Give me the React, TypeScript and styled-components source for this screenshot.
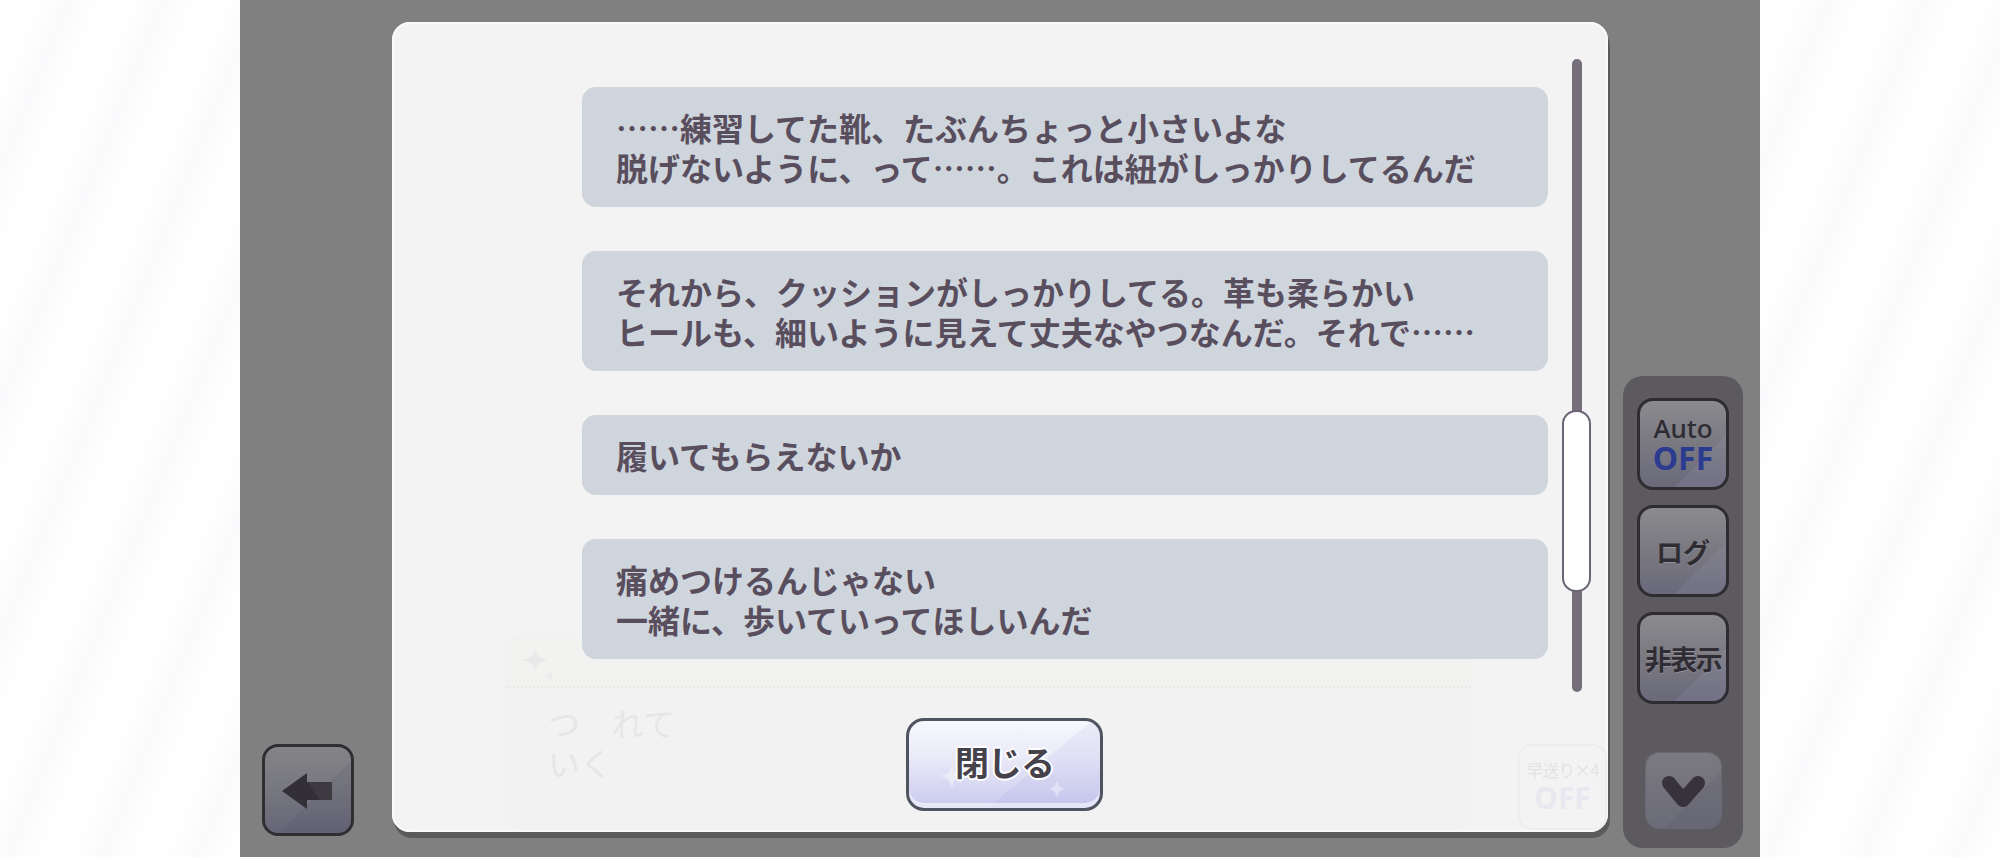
import styled, {createGlobalStyle} from 'styled-components';

const GlobalStyle = createGlobalStyle`
  html,
  body {
    margin: 0;
    padding: 0;
    width: 2000px;
    height: 857px;
    overflow: hidden;
    background: #ffffff;
    font-family: 'Noto Sans CJK JP', 'Noto Sans', sans-serif;
  }
`;

const lines = [
  ['……練習してた靴、たぶんちょっと小さいよな', '脱げないように、って……。これは紐がしっかりしてるんだ'],
  ['それから、クッションがしっかりしてる。革も柔らかい', 'ヒールも、細いように見えて丈夫なやつなんだ。それで……'],
  ['履いてもらえないか'],
  ['痛めつけるんじゃない', '一緒に、歩いていってほしいんだ'],
];

const Screen = styled.div`
  display: flex;
  width: 2000px;
  height: 857px;
`;

const Backdrop = styled.div`
  width: 240px;
  flex-shrink: 0;
  background: repeating-linear-gradient(
    112deg,
    #fefefe 0px,
    #fefefe 40px,
    #fafafc 64px,
    #fefefe 88px
  );
`;

const Stage = styled.div`
  flex: 1;
  display: flex;
  align-items: flex-end;
  padding: 0 17px 0 22px;
  background: #808080;
`;

const BackButton = styled.div`
  width: 92px;
  height: 92px;
  flex-shrink: 0;
  margin-bottom: 21px;
  box-sizing: border-box;
  border: 3px solid #302d33;
  border-radius: 16px;
  background: linear-gradient(135deg, transparent 58%, rgba(40, 40, 80, 0.08) 58%),
    linear-gradient(180deg, #848488 0%, #77777f 50%, #666679 100%);
  display: flex;
  align-items: center;
  justify-content: center;
`;

const Panel = styled.div`
  position: relative;
  align-self: flex-start;
  width: 1216px;
  height: 810px;
  flex-shrink: 0;
  margin: 22px 15px 0 38px;
  border-radius: 18px;
  background: #f3f3f3;
  box-shadow: inset 0 0 0 2px #fafafa, 2px 6px 0 #5b5b5b;
  display: flex;
  flex-direction: column;
`;

// game UI left under the translucent log panel
const GhostPlate = styled.div`
  position: absolute;
  left: 113px;
  top: 615px;
  width: 965px;
  height: 190px;
  border-radius: 14px;
  border: 1px solid #f0f0f0;
  background: #f2f2f2;
`;

const GhostName = styled.div`
  height: 50px;
  border-bottom: 2px dotted #e9e9e9;
  border-radius: 14px 14px 0 0;
  background: #f2f2f0;
  padding: 6px 0 0 15px;
  box-sizing: border-box;
`;

const GhostText = styled.div`
  padding: 14px 0 0 42px;
  font-size: 32px;
  line-height: 40px;
  color: #e6e6e6;
`;

const GhostFast = styled.div`
  position: absolute;
  left: 1126px;
  top: 722px;
  width: 89px;
  height: 86px;
  box-sizing: border-box;
  border: 2px solid #ededed;
  border-radius: 14px;
  display: flex;
  flex-direction: column;
  align-items: center;
  justify-content: center;
  gap: 2px;
`;

const GhostFastLabel = styled.div`
  font-size: 17px;
  line-height: 20px;
  color: #e3e3e3;
  letter-spacing: -1px;
`;

const GhostFastOff = styled.div`
  font-family: 'Noto Sans', sans-serif;
  font-weight: 700;
  font-size: 30px;
  line-height: 32px;
  color: #e8e9f0;
`;

const ScrollRow = styled.div`
  position: relative;
  display: flex;
  height: 633px;
  margin-top: 37px;
  padding-left: 190px;
`;

const List = styled.div`
  width: 966px;
  display: flex;
  flex-direction: column;
  gap: 44px;
  padding-top: 28px;
`;

const Bubble = styled.div`
  padding: 20px 34px;
  border-radius: 14px;
  background: #cfd5dc;
  color: #594e5e;
  font-size: 32px;
  font-weight: 700;
  line-height: 40px;
  white-space: nowrap;
`;

const ScrollTrack = styled.div`
  position: relative;
  width: 29px;
  margin-left: 14px;

  &::before {
    content: '';
    position: absolute;
    left: 10px;
    top: 0;
    bottom: 0;
    width: 10px;
    border-radius: 5px;
    background: #776e7b;
  }
`;

const ScrollThumb = styled.div`
  position: absolute;
  left: 0;
  width: 29px;
  box-sizing: border-box;
  border: 2px solid #6d6476;
  border-radius: 14px;
  background: #ffffff;
`;

const Footer = styled.div`
  position: relative;
  display: flex;
  justify-content: center;
  padding: 26px 0 0 9px;
`;

const CloseButton = styled.div`
  position: relative;
  width: 197px;
  height: 93px;
  box-sizing: border-box;
  border: 3px solid #4f5560;
  border-radius: 18px;
  background: linear-gradient(140deg, transparent 62%, rgba(150, 150, 220, 0.12) 62%),
    linear-gradient(180deg, #f7f7fd 0%, #ebebf9 40%, #c9c9ee 100%);
  box-shadow: inset 0 -5px 0 rgba(255, 255, 255, 0.55);
  display: flex;
  align-items: center;
  justify-content: center;
  overflow: hidden;
`;

const CloseLabel = styled.span`
  position: relative;
  margin-top: -6px;
  font-size: 34px;
  font-weight: 700;
  color: #45424c;
  letter-spacing: -1px;
  text-shadow: 2px 0 0 #fff, -2px 0 0 #fff, 0 2px 0 #fff, 0 -2px 0 #fff,
    1px 1px 0 #fff, -1px -1px 0 #fff, 1px -1px 0 #fff, -1px 1px 0 #fff;
`;

const Sparkle = styled.svg<{$x: number; $y: number}>`
  position: absolute;
  left: ${(p) => p.$x}px;
  top: ${(p) => p.$y}px;
`;

const SidePanel = styled.div`
  width: 120px;
  height: 472px;
  flex-shrink: 0;
  margin-bottom: 9px;
  box-sizing: border-box;
  padding: 22px 14px 20px;
  border-radius: 20px;
  background: #5c5a5e;
  display: flex;
  flex-direction: column;
  gap: 15px;
`;

const ToolButton = styled.div`
  width: 92px;
  height: 92px;
  box-sizing: border-box;
  border: 3px solid #2e2b31;
  border-radius: 16px;
  background: linear-gradient(135deg, transparent 70%, rgba(170, 170, 210, 0.12) 70%),
    linear-gradient(180deg, #8b8a8e 0%, #7a7981 50%, #6a697b 100%);
  display: flex;
  flex-direction: column;
  align-items: center;
  justify-content: center;
`;

const ToolLabel = styled.span<{$tight?: boolean}>`
  font-size: 27px;
  font-weight: 700;
  color: #2f2c33;
  letter-spacing: ${(p) => (p.$tight ? '-1.5px' : '0')};
  text-shadow: 0 1px 0 rgba(200, 200, 210, 0.35);
`;

const AutoLabel = styled.span`
  font-family: 'Noto Sans', sans-serif;
  font-size: 26px;
  font-weight: 500;
  line-height: 28px;
  color: #2e2b33;
`;

const OffLabel = styled.span`
  font-family: 'Noto Sans', sans-serif;
  font-size: 32px;
  font-weight: 700;
  line-height: 32px;
  color: #2b3c90;
`;

const NextButton = styled.div`
  width: 75px;
  height: 75px;
  margin-top: auto;
  align-self: center;
  border-radius: 13px;
  background: linear-gradient(135deg, transparent 62%, rgba(60, 60, 90, 0.1) 62%),
    linear-gradient(180deg, #7b7a80 0%, #6b6b79 100%);
  box-shadow: 0 0 0 1px rgba(120, 120, 128, 0.5);
  display: flex;
  align-items: center;
  justify-content: center;
`;

const starPath = 'M13 0 C14 9 17 12 26 13 C17 14 14 17 13 26 C12 17 9 14 0 13 C9 12 12 9 13 0 Z';

export default function App() {
  return (
    <>
      <GlobalStyle />
      <Screen>
        <Backdrop />
        <Stage>
          <BackButton>
            <svg width="86" height="86" viewBox="3 3 86 86">
              <polygon points="20,47 45,29 45,38 70,38 70,56 45,56 45,65" fill="#332f37" />
              <polygon points="45,38 70,38 70,56 58,56" fill="#3d3941" />
            </svg>
          </BackButton>

          <Panel>
            <GhostPlate>
              <GhostName>
                <svg width="36" height="40" viewBox="0 0 36 40">
                  <path d="M14 2 C15 12 18 15 28 16 C18 17 15 20 14 30 C13 20 10 17 0 16 C10 15 13 12 14 2 Z" fill="#e9e9e9" />
                  <path d="M29 26 C29.5 30 31 31.5 35 32 C31 32.5 29.5 34 29 38 C28.5 34 27 32.5 23 32 C27 31.5 28.5 30 29 26 Z" fill="#ebebeb" />
                </svg>
              </GhostName>
              <GhostText>
                つ　れて
                <br />
                いく
              </GhostText>
            </GhostPlate>
            <GhostFast>
              <GhostFastLabel>早送り×4</GhostFastLabel>
              <GhostFastOff>OFF</GhostFastOff>
            </GhostFast>

            <ScrollRow>
              <List>
                {lines.map((text, i) => (
                  <Bubble key={i}>
                    {text.map((line, j) => (
                      <span key={j}>
                        {j > 0 && <br />}
                        {line}
                      </span>
                    ))}
                  </Bubble>
                ))}
              </List>
              <ScrollTrack>
                <ScrollThumb style={{top: 351, height: 182}} />
              </ScrollTrack>
            </ScrollRow>

            <Footer>
              <CloseButton>
                <Sparkle $x={30} $y={42} width="26" height="26" viewBox="0 0 26 26">
                  <path d={starPath} fill="rgba(255,255,255,0.45)" />
                </Sparkle>
                <Sparkle $x={138} $y={58} width="20" height="20" viewBox="0 0 26 26">
                  <path d={starPath} fill="rgba(255,255,255,0.4)" />
                </Sparkle>
                <CloseLabel>閉じる</CloseLabel>
              </CloseButton>
            </Footer>
          </Panel>

          <SidePanel>
            <ToolButton>
              <AutoLabel>Auto</AutoLabel>
              <OffLabel>OFF</OffLabel>
            </ToolButton>
            <ToolButton>
              <ToolLabel>ログ</ToolLabel>
            </ToolButton>
            <ToolButton>
              <ToolLabel $tight>非表示</ToolLabel>
            </ToolButton>
            <NextButton>
              <svg width="75" height="75" viewBox="0 0 75 75">
                <polyline
                  points="23,30 37,47 52,30"
                  fill="none"
                  stroke="#37323c"
                  strokeWidth="14"
                  strokeLinecap="round"
                  strokeLinejoin="round"
                />
              </svg>
            </NextButton>
          </SidePanel>
        </Stage>
        <Backdrop />
      </Screen>
    </>
  );
}
